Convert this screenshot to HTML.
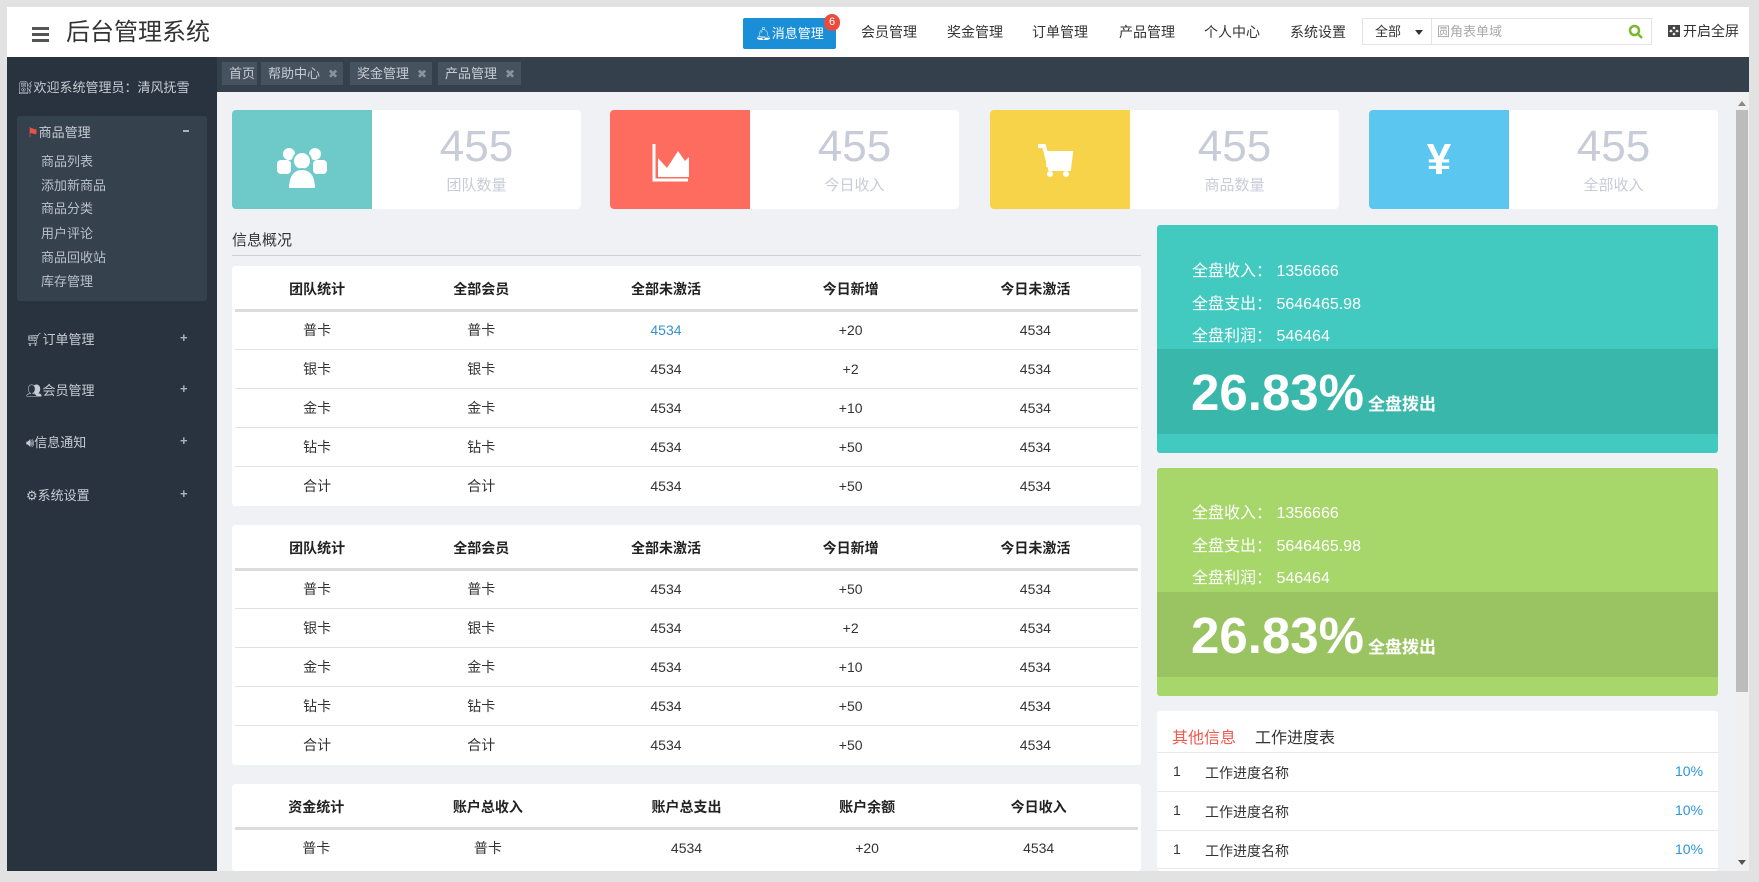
<!DOCTYPE html>
<html><head><meta charset="utf-8">
<style>
*{margin:0;padding:0;box-sizing:border-box}
body{width:1759px;height:882px;background:#e2e2e2;position:relative;overflow:hidden;font-family:"Liberation Sans","Noto Sans CJK SC",sans-serif;font-size:13px;color:#333}
.a{position:absolute}
.hdr{left:7px;top:7px;width:1742px;height:50px;background:#fff}
.side{left:7px;top:57px;width:210px;height:814px;background:#29333f}
.tabs{left:217px;top:57px;width:1532px;height:35px;background:#35404d}
.main{left:217px;top:92px;width:1518px;height:779px;background:#f0f1f5;overflow:hidden}
.sb{left:1735px;top:92px;width:14px;height:779px;background:#f0f0f0}
.tab{top:62px;height:23px;background:#47525f;color:#c6ccd3;font-size:13px;line-height:23px;padding-left:7px}
.tab i{font-style:normal;color:#8a939d;margin-left:8px;font-size:12px}
.nav{top:20px;font-size:14px;color:#333;line-height:24px}
.card{top:110px;width:349px;height:99px;background:#fff;border-radius:4px;overflow:hidden}
.card .ic{position:absolute;left:0;top:0;width:140px;height:99px}
.card .n{position:absolute;left:140px;right:0;top:12px;text-align:center;font-size:44px;color:#c8cbd8;line-height:50px}
.card .l{position:absolute;left:140px;right:0;top:64px;text-align:center;font-size:15px;color:#c8cbd8}
table{border-collapse:collapse;width:100%}
.tbl{left:232px;width:909px;background:#fff;border-radius:3px;padding:0 3px;overflow:hidden}
.tbl th{height:44px;padding-top:4px;font-size:14px;font-weight:bold;border-bottom:3px solid #dcdcdc;color:#222}
.tbl td{height:39px;text-align:center;font-size:14px;border-bottom:1px solid #e2e2e2;color:#333}
.tbl tr:last-child td{border-bottom:none}
.rp{left:1157px;width:561px;height:228px;border-radius:3px;color:#fff;overflow:hidden}
.rp .t{position:absolute;left:35px;font-size:16px}
.rp .dk{position:absolute;left:0;right:0;top:124px;height:85px}
.rp .pct{position:absolute;left:34px;top:14px;font-size:51px;font-weight:bold;line-height:60px}
.rp .pct span{font-size:17px;margin-left:4px}
.si{left:41px;font-size:13px;color:#b9c0c8}
.mi{left:26px;font-size:13px;color:#c6ccd3}
.pl{left:180px;color:#aab2bb;font-size:13px;font-weight:bold}
</style></head><body>
<div class="a hdr"></div>
<div class="a" style="left:32px;top:27px;width:17px;height:3px;background:#555;box-shadow:0 6px 0 #555,0 12px 0 #555"></div>
<div class="a" style="left:66px;top:17px;font-size:24px;color:#333;line-height:32px">后台管理系统</div>
<div class="a" style="left:743px;top:18px;width:93px;height:31px;background:#1a8fd8;border-radius:2px;color:#fff;font-size:13px;line-height:31px;text-align:center">🔔︎消息管理</div>
<div class="a" style="left:824px;top:14px;width:16px;height:17px;border-radius:8px;background:#e84c3d;color:#fff;font-size:11px;text-align:center;line-height:17px">6</div>
<div class="a nav" style="left:861px">会员管理</div>
<div class="a nav" style="left:947px">奖金管理</div>
<div class="a nav" style="left:1032px">订单管理</div>
<div class="a nav" style="left:1119px">产品管理</div>
<div class="a nav" style="left:1204px">个人中心</div>
<div class="a nav" style="left:1290px">系统设置</div>
<div class="a" style="left:1362px;top:18px;width:290px;height:27px;border:1px solid #e3e3e3;background:#fff"></div>
<div class="a" style="left:1431px;top:18px;width:1px;height:27px;background:#e3e3e3"></div>
<div class="a" style="left:1375px;top:22px;font-size:13px;line-height:19px">全部</div>
<div class="a" style="left:1415px;top:30px;border:4px solid transparent;border-top:5px solid #333"></div>
<div class="a" style="left:1437px;top:22px;font-size:13px;line-height:19px;color:#aaa">圆角表单域</div>
<svg class="a" style="left:1628px;top:24px" width="15" height="15"><circle cx="6.5" cy="6.5" r="4.5" fill="none" stroke="#7cb82f" stroke-width="2.5"/><path d="M10 10l4 4" stroke="#7cb82f" stroke-width="2.5"/></svg>
<svg class="a" style="left:1668px;top:25px" width="12" height="12"><path d="M1 1h4L1 5zM11 1v4L7 1zM1 11V7l4 4zM11 11H7l4-4zM2 2l8 8M10 2l-8 8" stroke="#444" stroke-width="2" fill="#444"/></svg>
<div class="a" style="left:1683px;top:22px;font-size:14px;line-height:19px">开启全屏</div>

<div class="a side"></div>
<div class="a" style="left:17px;top:77px;font-size:13px;color:#c6ccd3">⛽︎欢迎系统管理员：清风抚雪</div>
<div class="a" style="left:17px;top:116px;width:190px;height:185px;background:#36414e;border-radius:3px"></div>
<div class="a" style="left:27px;top:122px;font-size:13px;color:#c6ccd3"><span style="color:#e8504a">⚑</span>商品管理</div>
<div class="a" style="left:183px;top:130px;width:6px;height:2px;background:#aab2bb"></div>
<div class="a si" style="top:151px">商品列表</div>
<div class="a si" style="top:175px">添加新商品</div>
<div class="a si" style="top:198px">商品分类</div>
<div class="a si" style="top:223px">用户评论</div>
<div class="a si" style="top:247px">商品回收站</div>
<div class="a si" style="top:271px">库存管理</div>
<div class="a mi" style="top:329px">🛒︎订单管理</div><div class="a pl" style="top:330px">+</div>
<div class="a mi" style="top:380px">👥︎会员管理</div><div class="a pl" style="top:381px">+</div>
<div class="a mi" style="top:432px">🔊︎信息通知</div><div class="a pl" style="top:433px">+</div>
<div class="a mi" style="top:485px">⚙︎系统设置</div><div class="a pl" style="top:486px">+</div>

<div class="a tabs"></div>
<div class="a tab" style="left:222px;width:35px">首页</div>
<div class="a tab" style="left:261px;width:82px">帮助中心<i>✖</i></div>
<div class="a tab" style="left:350px;width:82px">奖金管理<i>✖</i></div>
<div class="a tab" style="left:438px;width:83px">产品管理<i>✖</i></div>

<div class="a main"></div>
<div class="a sb"></div>
<div class="a" style="left:1736px;top:110px;width:12px;height:582px;background:#bcbcbc"></div>
<div class="a" style="left:1738px;top:101px;border:4px solid transparent;border-bottom:5px solid #888;border-top:0"></div>
<div class="a" style="left:1738px;top:860px;border:4px solid transparent;border-top:5px solid #555"></div>

<div class="a card" style="left:232px"><div class="ic" style="background:#6ecac8"><svg width="140" height="99"><g fill="#fff"><circle cx="57" cy="44" r="6"/><circle cx="83" cy="44" r="6"/><rect x="45" y="50" width="14" height="14" rx="4"/><rect x="81" y="50" width="14" height="14" rx="4"/><circle cx="70" cy="51" r="9" stroke="#6ecac8" stroke-width="2"/><path d="M56 79 q0-20 14-20 q14 0 14 20 z" stroke="#6ecac8" stroke-width="2"/></g></svg></div><div class="n">455</div><div class="l">团队数量</div></div>
<div class="a card" style="left:610px"><div class="ic" style="background:#fe6c5f"><svg width="140" height="99"><path d="M44 34v36h34" fill="none" stroke="#fff" stroke-width="3"/><path d="M48 67V48l9 10 11-17 7 10 4-4v20z" fill="#fff"/></svg></div><div class="n">455</div><div class="l">今日收入</div></div>
<div class="a card" style="left:990px"><div class="ic" style="background:#f6d348"><svg width="140" height="99"><path d="M48 36h6l6 23h19l2-16H56" fill="none" stroke="#fff" stroke-width="4"/><rect x="56" y="44" width="24" height="13" fill="#fff"/><circle cx="60" cy="64" r="3" fill="#fff"/><circle cx="76" cy="64" r="3" fill="#fff"/></svg></div><div class="n">455</div><div class="l">商品数量</div></div>
<div class="a card" style="left:1369px"><div class="ic" style="background:#5bc7f1"><div style="color:#fff;font-size:44px;font-weight:bold;text-align:center;line-height:99px">¥</div></div><div class="n">455</div><div class="l">全部收入</div></div>

<div class="a" style="left:232px;top:229px;font-size:15px;color:#333">信息概况</div>
<div class="a" style="left:232px;top:255px;width:909px;height:1px;background:#cfd1d6"></div>

<div class="a tbl" style="top:266px;height:240px"><table>
<tr><th>团队统计</th><th>全部会员</th><th>全部未激活</th><th>今日新增</th><th>今日未激活</th></tr>
<tr><td>普卡</td><td>普卡</td><td style="color:#3a8fd0">4534</td><td>+20</td><td>4534</td></tr>
<tr><td>银卡</td><td>银卡</td><td>4534</td><td>+2</td><td>4534</td></tr>
<tr><td>金卡</td><td>金卡</td><td>4534</td><td>+10</td><td>4534</td></tr>
<tr><td>钻卡</td><td>钻卡</td><td>4534</td><td>+50</td><td>4534</td></tr>
<tr><td>合计</td><td>合计</td><td>4534</td><td>+50</td><td>4534</td></tr></table></div>
<div class="a tbl" style="top:525px;height:240px"><table>
<tr><th>团队统计</th><th>全部会员</th><th>全部未激活</th><th>今日新增</th><th>今日未激活</th></tr>
<tr><td>普卡</td><td>普卡</td><td>4534</td><td>+50</td><td>4534</td></tr>
<tr><td>银卡</td><td>银卡</td><td>4534</td><td>+2</td><td>4534</td></tr>
<tr><td>金卡</td><td>金卡</td><td>4534</td><td>+10</td><td>4534</td></tr>
<tr><td>钻卡</td><td>钻卡</td><td>4534</td><td>+50</td><td>4534</td></tr>
<tr><td>合计</td><td>合计</td><td>4534</td><td>+50</td><td>4534</td></tr></table></div>
<div class="a tbl" style="top:784px;height:87px"><table>
<tr><th style="width:18%">资金统计</th><th style="width:20%">账户总收入</th><th style="width:24%">账户总支出</th><th style="width:16%">账户余额</th><th>今日收入</th></tr>
<tr><td>普卡</td><td>普卡</td><td>4534</td><td>+20</td><td>4534</td></tr></table></div>

<div class="a rp" style="top:225px;background:#42cac0">
<div class="t" style="top:32px">全盘收入： 1356666</div>
<div class="t" style="top:65px">全盘支出： 5646465.98</div>
<div class="t" style="top:97px">全盘利润： 546464</div>
<div class="dk" style="background:#3ab7ab"><div class="pct">26.83%<span>全盘拨出</span></div></div></div>
<div class="a rp" style="top:468px;background:#a7d76a">
<div class="t" style="top:31px">全盘收入： 1356666</div>
<div class="t" style="top:64px">全盘支出： 5646465.98</div>
<div class="t" style="top:96px">全盘利润： 546464</div>
<div class="dk" style="background:#9ac462"><div class="pct">26.83%<span>全盘拨出</span></div></div></div>

<div class="a" style="left:1157px;top:711px;width:561px;height:160px;background:#fff;border-radius:3px"></div>
<div class="a" style="left:1172px;top:724px;font-size:16px;color:#f05a4f">其他信息</div>
<div class="a" style="left:1255px;top:724px;font-size:16px;color:#333">工作进度表</div>
<div class="a" style="left:1157px;top:752px;width:561px;height:1px;background:#e8e8e8"></div>
<div class="a" style="left:1157px;top:791px;width:561px;height:1px;background:#e8e8e8"></div>
<div class="a" style="left:1157px;top:830px;width:561px;height:1px;background:#e8e8e8"></div>
<div class="a" style="left:1157px;top:868px;width:561px;height:1px;background:#e8e8e8"></div>
<div class="a" style="left:1173px;top:763px;font-size:14px">1</div><div class="a" style="left:1205px;top:763px;font-size:14px">工作进度名称</div><div class="a" style="left:1675px;top:763px;font-size:14px;color:#2a96d8">10%</div>
<div class="a" style="left:1173px;top:802px;font-size:14px">1</div><div class="a" style="left:1205px;top:802px;font-size:14px">工作进度名称</div><div class="a" style="left:1675px;top:802px;font-size:14px;color:#2a96d8">10%</div>
<div class="a" style="left:1173px;top:841px;font-size:14px">1</div><div class="a" style="left:1205px;top:841px;font-size:14px">工作进度名称</div><div class="a" style="left:1675px;top:841px;font-size:14px;color:#2a96d8">10%</div>
<div class="a" style="left:0;top:871px;width:1759px;height:11px;background:#e2e2e2"></div>
<div class="a" style="left:1749px;top:0;width:10px;height:882px;background:#e2e2e2"></div>
</body></html>
